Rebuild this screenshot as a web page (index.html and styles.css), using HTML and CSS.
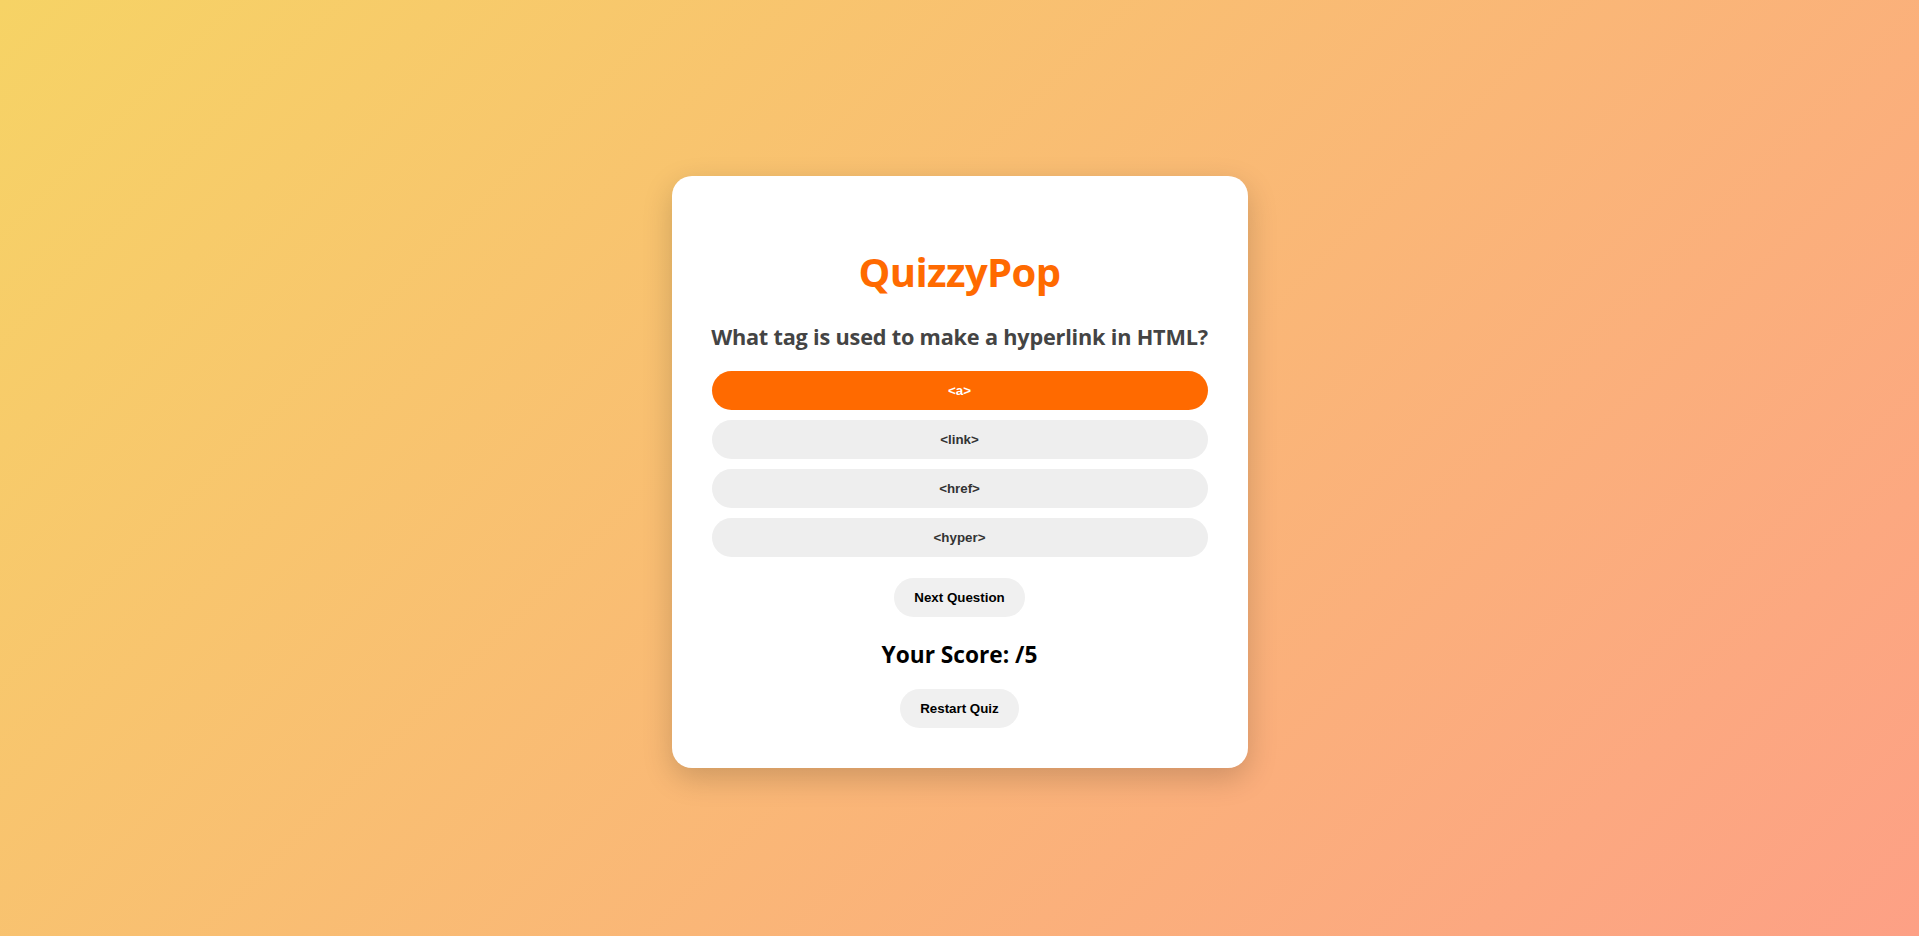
FILE: index.html
```html
<!DOCTYPE html>
<html lang="en">
<head>
<meta charset="UTF-8">
<title>QuizzyPop</title>
<link rel="stylesheet" href="styles.css">
</head>
<body>
<main class="page">
  <section class="card">
    <h1 class="title">QuizzyPop</h1>
    <h2 class="question">What tag is used to make a hyperlink in HTML?</h2>
    <div class="options">
      <button class="option selected">&lt;a&gt;</button>
      <button class="option">&lt;link&gt;</button>
      <button class="option">&lt;href&gt;</button>
      <button class="option">&lt;hyper&gt;</button>
    </div>
    <button class="pill next">Next Question</button>
    <h2 class="score">Your Score: /5</h2>
    <button class="pill restart">Restart Quiz</button>
  </section>
</main>
</body>
</html>
```
FILE: styles.css
```css
* { box-sizing: border-box; }
html, body { margin: 0; padding: 0; }
body {
  min-height: 100vh;
  background: linear-gradient(135deg, #f6d365 0%, #fda085 100%);
  font-family: "Open Sans", "Noto Sans", sans-serif;
}
.page {
  min-height: 100vh;
  display: flex;
  align-items: center;
  justify-content: center;
  padding-top: 8px;
}
.card {
  width: 576px;
  background: #fff;
  border-radius: 20px;
  padding: 40px;
  box-shadow: 0 10px 30px rgba(0, 0, 0, 0.18);
  display: flex;
  flex-direction: column;
  align-items: center;
}
.title {
  margin: 30px 0 0;
  font-size: 40px;
  line-height: 52px;
  font-weight: 700;
  color: #ff6a00;
  letter-spacing: -0.6px;
}
.question {
  margin: 24px 0 19px;
  font-size: 21.7px;
  line-height: 30px;
  font-weight: 700;
  color: #444;
  letter-spacing: -0.2px;
  white-space: nowrap;
}
.options {
  width: 100%;
  display: flex;
  flex-direction: column;
  gap: 10px;
}
.option {
  width: 100%;
  border: none;
  border-radius: 20px;
  padding: 12px;
  background: #eee;
  color: #333;
  font-family: "Liberation Sans", Arial, sans-serif;
  font-size: 13.33px;
  line-height: 15px;
  font-weight: 700;
}
.option.selected {
  background: #ff6a00;
  color: #fff;
}
.pill {
  border: none;
  border-radius: 20px;
  padding: 12px 20px;
  background: #f0f0f0;
  color: #000;
  font-family: "Liberation Sans", Arial, sans-serif;
  font-size: 13.33px;
  line-height: 15px;
  font-weight: 700;
}
.next { margin-top: 21px; }
.score {
  margin: 22px 0 0;
  font-size: 22.7px;
  line-height: 32px;
  font-weight: 700;
  color: #000;
}
.restart { margin-top: 18px; }
```
